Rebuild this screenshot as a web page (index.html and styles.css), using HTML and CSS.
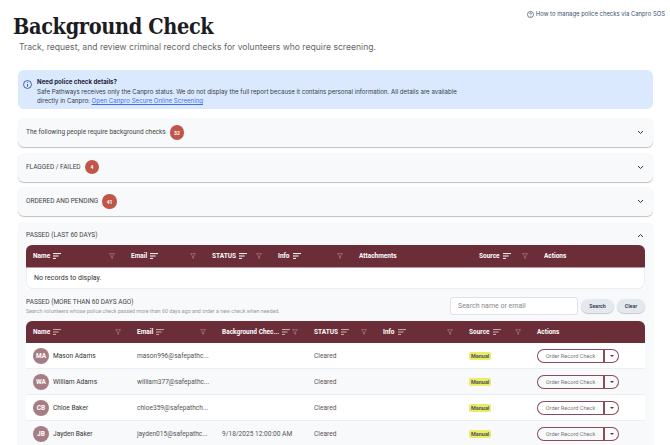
FILE: index.html
```html
<!DOCTYPE html>
<html lang="en">
<head>
  <meta charset="UTF-8">
  <title>Background Check</title>
  <link rel="stylesheet" href="styles.css">
</head>
<body>
  <svg class="defs" width="0" height="0">
    <symbol id="sort" viewBox="0 0 8 6"><path d="M0 .6h8M0 3h5.6M0 5.4h3" fill="none" stroke="currentColor" stroke-width="1"/></symbol>
    <symbol id="filter" viewBox="0 0 8 8"><path d="M.6.8h6.8L4.8 4v3.2L3.2 6.4V4z" fill="none" stroke="currentColor" stroke-width=".8"/></symbol>
  </svg>

  <header class="page-head">
    <div class="head-text">
      <h1>Background Check</h1>
      <p class="subtitle">Track, request, and review criminal record checks for volunteers who require screening.</p>
    </div>
    <a class="help-link">
      <svg width="7" height="7" viewBox="0 0 8 8"><circle cx="4" cy="4" r="3.5" fill="none" stroke="currentColor" stroke-width=".8"/><path d="M3 3c0-1.300 2-1.300 2 0 0 .8-1 .8-1 1.700M4 5.600v.8" fill="none" stroke="currentColor" stroke-width=".8"/></svg>
      <span>How to manage police checks via Canpro SOS</span>
    </a>
  </header>

  <section class="notice">
    <svg class="notice-icon" width="9" height="9" viewBox="0 0 10 10"><circle cx="5" cy="5" r="4.400" fill="none" stroke="currentColor" stroke-width=".9"/><path d="M5 4.500v3M5 2.500v1" fill="none" stroke="currentColor" stroke-width=".9"/></svg>
    <div>
      <div class="notice-title">Need police check details?</div>
      <p>Safe Pathways receives only the Canpro status. We do not display the full report because it contains personal information. All details are available<br>directly in Canpro: <a class="notice-link">Open Canpro Secure Online Screening</a></p>
    </div>
  </section>

  <div class="panel panel-closed">
    <span class="panel-title">The following people require background checks</span><span class="count">32</span>
    <svg class="chev" width="7" height="5" viewBox="0 0 7 5"><path d="M1 1l2.500 2.500L6 1" fill="none" stroke="currentColor" stroke-width="1"/></svg>
  </div>
  <div class="panel panel-closed">
    <span class="panel-title">FLAGGED / FAILED</span><span class="count">4</span>
    <svg class="chev" width="7" height="5" viewBox="0 0 7 5"><path d="M1 1l2.500 2.500L6 1" fill="none" stroke="currentColor" stroke-width="1"/></svg>
  </div>
  <div class="panel panel-closed">
    <span class="panel-title">ORDERED AND PENDING</span><span class="count">41</span>
    <svg class="chev" width="7" height="5" viewBox="0 0 7 5"><path d="M1 1l2.500 2.500L6 1" fill="none" stroke="currentColor" stroke-width="1"/></svg>
  </div>

  <div class="panel panel-open">
    <div class="open-head">
      <span class="panel-title">PASSED (LAST 60 DAYS)</span>
      <svg class="chev" width="7" height="5" viewBox="0 0 7 5"><path d="M1 4l2.500-2.500L6 4" fill="none" stroke="currentColor" stroke-width="1"/></svg>
    </div>

    <table class="grid grid-recent">
      <colgroup><col class="w98"><col class="w81"><col class="w66"><col class="w81"><col class="w120"><col class="w65"><col></colgroup>
      <thead>
        <tr>
          <th><div class="th-in">Name <svg class="sort"><use href="#sort"/></svg><svg class="filter"><use href="#filter"/></svg></div></th>
          <th><div class="th-in">Email <svg class="sort"><use href="#sort"/></svg><svg class="filter"><use href="#filter"/></svg></div></th>
          <th><div class="th-in">STATUS <svg class="sort"><use href="#sort"/></svg><svg class="filter"><use href="#filter"/></svg></div></th>
          <th><div class="th-in">Info <svg class="sort"><use href="#sort"/></svg><svg class="filter"><use href="#filter"/></svg></div></th>
          <th>Attachments</th>
          <th><div class="th-in">Source <svg class="sort"><use href="#sort"/></svg><svg class="filter"><use href="#filter"/></svg></div></th>
          <th>Actions</th>
        </tr>
      </thead>
      <tbody>
        <tr><td class="empty" colspan="7">No records to display.</td></tr>
      </tbody>
    </table>

    <div class="older-head">
      <div>
        <div class="panel-title">PASSED (MORE THAN 60 DAYS AGO)</div>
        <div class="older-note">Search volunteers whose police check passed more than 60 days ago and order a new check when needed.</div>
      </div>
      <div class="search">
        <input class="search-input" type="text" placeholder="Search name or email">
        <button class="pill pill-search">Search</button>
        <button class="pill">Clear</button>
      </div>
    </div>

    <table class="grid grid-older">
      <colgroup><col class="w104"><col class="w85"><col class="w92"><col class="w69"><col class="w86"><col class="w68"><col></colgroup>
      <thead>
        <tr>
          <th><div class="th-in">Name <svg class="sort"><use href="#sort"/></svg><svg class="filter"><use href="#filter"/></svg></div></th>
          <th><div class="th-in">Email <svg class="sort"><use href="#sort"/></svg><svg class="filter"><use href="#filter"/></svg></div></th>
          <th><div class="th-in">Background Chec... <svg class="sort"><use href="#sort"/></svg><svg class="filter"><use href="#filter"/></svg></div></th>
          <th><div class="th-in">STATUS <svg class="sort"><use href="#sort"/></svg><svg class="filter"><use href="#filter"/></svg></div></th>
          <th><div class="th-in">Info <svg class="sort"><use href="#sort"/></svg><svg class="filter"><use href="#filter"/></svg></div></th>
          <th><div class="th-in">Source <svg class="sort"><use href="#sort"/></svg><svg class="filter"><use href="#filter"/></svg></div></th>
          <th>Actions</th>
        </tr>
      </thead>
      <tbody>
        <tr>
          <td><div class="person"><span class="avatar">MA</span>Mason Adams</div></td>
          <td>mason996@safepathc...</td><td></td><td>Cleared</td><td></td>
          <td><span class="tag">Manual</span></td>
          <td><div class="split"><span class="split-main">Order Record Check</span><span class="split-drop"></span></div></td>
        </tr>
        <tr>
          <td><div class="person"><span class="avatar">WA</span>William Adams</div></td>
          <td>william377@safepathc...</td><td></td><td>Cleared</td><td></td>
          <td><span class="tag">Manual</span></td>
          <td><div class="split"><span class="split-main">Order Record Check</span><span class="split-drop"></span></div></td>
        </tr>
        <tr>
          <td><div class="person"><span class="avatar">CB</span>Chloe Baker</div></td>
          <td>chloe359@safepathch...</td><td></td><td>Cleared</td><td></td>
          <td><span class="tag">Manual</span></td>
          <td><div class="split"><span class="split-main">Order Record Check</span><span class="split-drop"></span></div></td>
        </tr>
        <tr>
          <td><div class="person"><span class="avatar">JB</span>Jayden Baker</div></td>
          <td>jayden015@safepathc...</td><td>9/18/2025 12:00:00 AM</td><td>Cleared</td><td></td>
          <td><span class="tag">Manual</span></td>
          <td><div class="split"><span class="split-main">Order Record Check</span><span class="split-drop"></span></div></td>
        </tr>
      </tbody>
    </table>
  </div>
</body>
</html>
```

FILE: styles.css
```css
html, body {
  height: 445px;
  overflow: hidden;
}

body {
  margin: 0;
  padding: 0 17px 0 18px;
  background: white;
  font-family: "Inter", sans-serif;
  color: #333;
}

.defs {
  position: absolute;
}

.page-head {
  display: flex;
  justify-content: space-between;
  align-items: flex-start;
  height: 70px;
}

.head-text {
  flex: none;
}

h1 {
  margin: 10px 0 0 -5px;
  font-family: "DejaVu Serif", serif;
  font-stretch: condensed;
  font-size: 21.500px;
  line-height: 34px;
  font-weight: 700;
  letter-spacing: -0.35px;
  color: #1c1c22;
}

.subtitle {
  margin: -3px 0 0 1px;
  font-size: 8.600px;
  line-height: 12px;
  color: #666;
}

.help-link {
  display: flex;
  align-items: center;
  flex: none;
  gap: 2px;
  margin: 10px -12px 0 0;
  font-size: 5.900px;
  line-height: 8px;
  white-space: nowrap;
  color: #3e4f6e;
}

.notice {
  display: flex;
  gap: 5px;
  height: 39px;
  box-sizing: border-box;
  padding: 7px 5px;
  background: #dbe9fe;
  border-radius: 6px;
  font-size: 6.120px;
  line-height: 9.500px;
}

.notice-icon {
  margin-top: 3px;
  color: #1f4a8c;
  flex: none;
}

.notice-title {
  font-weight: 700;
  color: #1c2233;
}

.notice p {
  margin: 0;
  color: #333a4a;
}

.notice-link {
  color: #3b6ff0;
  text-decoration: underline;
}

.panel {
  background: #f8f9fb;
  border-radius: 6px;
  box-shadow: 0 1px 1px rgba(0,0,0,0.25);
  box-sizing: border-box;
  font-family: "Roboto", sans-serif;
}

.panel-closed {
  display: flex;
  align-items: center;
  height: 29px;
  margin-top: 5.600px;
  padding: 0 8px;
}

.notice + .panel-closed {
  margin-top: 9px;
}

.panel-title {
  font-size: 6.500px;
  line-height: 9px;
  color: #444;
}

.count {
  display: flex;
  align-items: center;
  justify-content: center;
  width: 14.500px;
  height: 14.500px;
  margin-left: 4px;
  border-radius: 50%;
  background: #c0564a;
  color: white;
  font-size: 5px;
  font-weight: 700;
}

.chev {
  margin-left: auto;
  margin-right: 1px;
  color: #333;
}

.panel-open {
  margin-top: 5.600px;
  height: 300px;
  padding: 9px 8px 0;
}

.open-head {
  display: flex;
  align-items: center;
  height: 9px;
  margin-bottom: 5px;
}

.grid {
  width: 100%;
  table-layout: fixed;
  border-collapse: separate;
  border-spacing: 0;
  background: white;
  font-size: 6.600px;
}

.w65 { width: 65px; }
.w66 { width: 66px; }
.w68 { width: 68px; }
.w69 { width: 69px; }
.w81 { width: 81px; }
.w85 { width: 85px; }
.w86 { width: 86px; }
.w92 { width: 92px; }
.w98 { width: 98px; }
.w104 { width: 104px; }
.w120 { width: 120px; }

.grid th {
  height: 22px;
  padding: 0 7px;
  background: #6b2d38;
  color: white;
  font-size: 6.500px;
  font-weight: 700;
  text-align: left;
  white-space: nowrap;
  overflow: hidden;
}

.grid-recent th {
  border-bottom: 1px solid #b99aa0;
}

.grid th:first-child { border-top-left-radius: 6px; }
.grid th:last-child { border-top-right-radius: 6px; }

.th-in {
  display: flex;
  align-items: center;
}

.sort {
  width: 8px;
  height: 6px;
  margin-left: 3px;
}

.filter {
  width: 6px;
  height: 6px;
  margin-left: auto;
  margin-right: 2px;
  color: #a98a90;
}

.grid-older .sort {
  color: #c9b2b6;
}

.empty {
  height: 20px;
  padding: 0 7px;
  font-size: 7px;
  color: #333;
  border: 1px solid #eceef2;
  border-top: none;
  border-radius: 0 0 6px 6px;
}

.older-head {
  display: flex;
  justify-content: space-between;
  align-items: flex-start;
  height: 24px;
  margin-top: 8.500px;
}

.older-head .panel-title {
  margin-top: 1px;
}

.older-note {
  margin-top: 1px;
  font-size: 5.350px;
  line-height: 7px;
  color: #999;
}

.search {
  display: flex;
  align-items: center;
  gap: 3px;
}

.search-input {
  width: 128px;
  height: 18px;
  box-sizing: border-box;
  padding: 0 7px;
  border: 1px solid #dfe2e8;
  border-radius: 3px;
  background: white;
  font-family: "Roboto", sans-serif;
  font-size: 7px;
}

.search-input::placeholder {
  color: #888;
}

.pill {
  height: 14px;
  width: 28px;
  padding: 0;
  border: none;
  border-radius: 7px;
  background: #e4e9f0;
  box-shadow: 0 1px 1px rgba(0,0,0,0.2);
  font-family: "Roboto", sans-serif;
  font-size: 5.300px;
  font-weight: 700;
  color: #445;
}

.pill-search {
  width: 33px;
}

.grid-older td {
  height: 26px;
  box-sizing: border-box;
  padding: 0 7px;
  border-bottom: 1px solid #eceef2;
  color: #555;
  white-space: nowrap;
  overflow: hidden;
}

.grid-older tbody tr:nth-child(even) td {
  background: #f8f9fb;
}

.person {
  display: flex;
  align-items: center;
  gap: 4px;
  color: #333;
}

.avatar {
  display: flex;
  align-items: center;
  justify-content: center;
  width: 16px;
  height: 16px;
  border-radius: 50%;
  background: #a67c85;
  color: white;
  font-size: 6.500px;
  font-weight: 700;
}

.tag {
  padding: 1px 2px;
  border-radius: 2px;
  background: #e8ec6a;
  color: #555;
  font-size: 5.500px;
  font-weight: 700;
}

.split {
  display: flex;
  width: 82px;
  height: 14.500px;
}

.split-main {
  flex: 1;
  display: flex;
  align-items: center;
  justify-content: center;
  border: 1px solid #8a4c58;
  border-right-width: 2px;
  border-radius: 7px 0 0 7px;
  font-size: 5.600px;
  color: #777;
}

.split-drop {
  position: relative;
  width: 14px;
  box-sizing: border-box;
  border: 1px solid #8a4c58;
  border-left-width: 0;
  border-radius: 0 7px 7px 0;
}

.split-drop::after {
  content: "";
  position: absolute;
  left: 5px;
  top: 5px;
  border: 2px solid transparent;
  border-top-color: #6b2d38;
}
```
